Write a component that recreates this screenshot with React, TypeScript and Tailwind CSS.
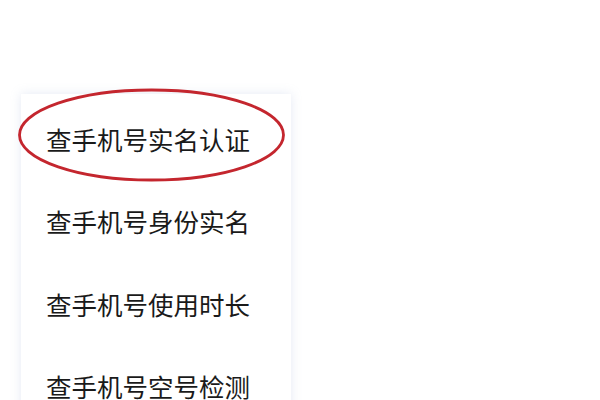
const ITEMS = ["查手机号实名认证", "查手机号身份实名", "查手机号使用时长", "查手机号空号检测"]

export default function App() {
  return (
    <div
      className="relative w-[600px] h-[400px] overflow-hidden bg-white"
      style={{ fontFamily: '"Noto Sans CJK SC", "Noto Sans", sans-serif' }}
    >
      <div className="ml-[21px] mt-[94px] w-[270px] pt-[3px] bg-white shadow-[0_0_10px_rgba(150,170,210,0.25)]">
        {ITEMS.map((t) => (
          <div key={t} className="h-[82.5px] flex items-center pl-[25px] text-[25.5px] leading-none text-[#1a1a1a]">
            {t}
          </div>
        ))}
      </div>
      {/* red hand-drawn ring round the first item */}
      <svg className="absolute left-0 top-0 pointer-events-none" width="600" height="400">
        <ellipse cx="151.5" cy="135" rx="132" ry="45" fill="none" stroke="#c4262e" strokeWidth="2.8" />
      </svg>
    </div>
  )
}
